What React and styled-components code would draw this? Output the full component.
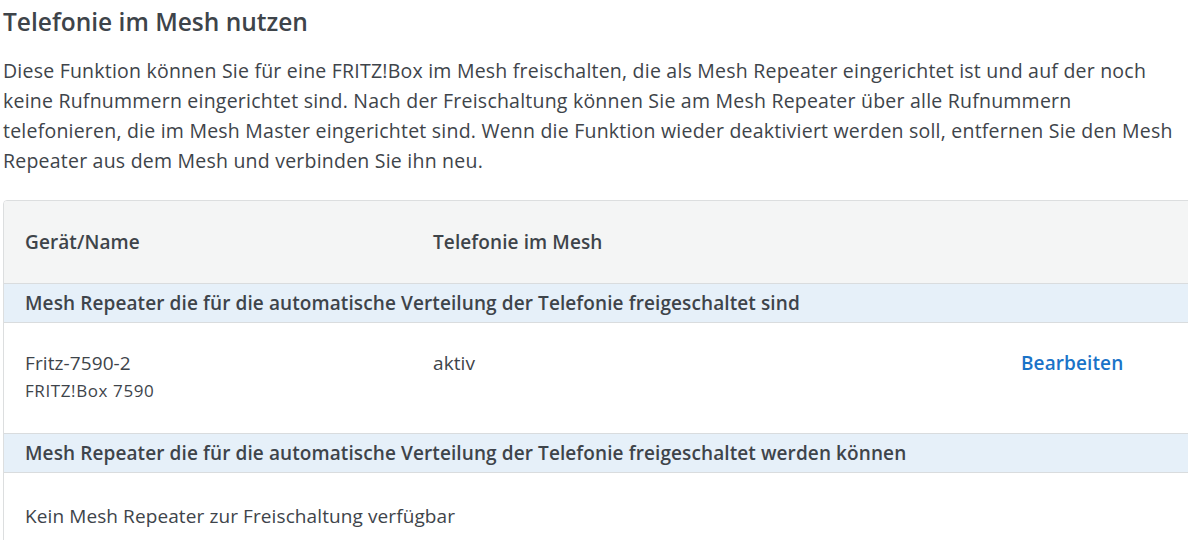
import styled, { createGlobalStyle } from "styled-components";

const Global = createGlobalStyle`
  html, body {
    margin: 0;
    padding: 0;
    background: #fff;
    overflow: hidden;
  }
  body {
    font-family: "Open Sans", "Liberation Sans", sans-serif;
    color: #3e444a;
  }
`;

const Page = styled.main`
  padding: 6px 0 0 3px;
  width: 1185px;
  height: 540px;
  overflow: hidden;
`;

const Title = styled.h2`
  margin: 0;
  font-size: 24.5px;
  font-weight: 600;
  line-height: 32px;
  color: #3e444a;
`;

const Intro = styled.p`
  margin: 18px 0 24px;
  max-width: 1180px;
  font-size: 19.5px;
  line-height: 30px;
  letter-spacing: 0.22px;
`;

const Card = styled.section`
  width: calc(100% + 40px);
  border: 1px solid #dcdedf;
  border-radius: 4px;
  overflow: hidden;
`;

const Row = styled.div`
  display: grid;
  grid-template-columns: 408px 588px auto;
  align-items: ${(p) => (p.$top ? "start" : "center")};
  padding: ${(p) => p.$pad || "0"} 0 0 21px;
  min-height: ${(p) => p.$h}px;
  box-sizing: border-box;
  background: ${(p) => p.$bg || "#fff"};
  border-bottom: ${(p) => (p.$last ? "none" : "1px solid #d9dcde")};
  font-size: 19px;
  letter-spacing: 0.1px;
`;

const HeadCell = styled.div`
  font-weight: 600;
`;

const GroupTitle = styled.div`
  grid-column: 1 / -1;
  font-weight: ${(p) => (p.$plain ? 400 : 600)};
`;

const Name = styled.div`
  line-height: 24px;
`;

const Model = styled.div`
  margin-top: 6px;
  font-size: 17px;
  line-height: 20px;
  letter-spacing: 0.6px;
`;

const Link = styled.a`
  color: #1a73c8;
  font-weight: 600;
  line-height: 24px;
  cursor: pointer;
`;

export default function App() {
  return (
    <>
      <Global />
      <Page>
        <Title>Telefonie im Mesh nutzen</Title>
        <Intro>
          Diese Funktion können Sie für eine FRITZ!Box im Mesh freischalten, die als Mesh
          Repeater eingerichtet ist und auf der noch keine Rufnummern eingerichtet sind. Nach
          der Freischaltung können Sie am Mesh Repeater über alle Rufnummern telefonieren, die
          im Mesh Master eingerichtet sind. Wenn die Funktion wieder deaktiviert werden soll,
          entfernen Sie den Mesh Repeater aus dem Mesh und verbinden Sie ihn neu.
        </Intro>
        <Card>
          <Row $h={83} $bg="#f4f5f5">
            <HeadCell>Gerät/Name</HeadCell>
            <HeadCell>Telefonie im Mesh</HeadCell>
          </Row>
          <Row $h={39} $bg="#e6f0f9">
            <GroupTitle>
              Mesh Repeater die für die automatische Verteilung der Telefonie freigeschaltet sind
            </GroupTitle>
          </Row>
          <Row $h={111} $top $pad="28px">
            <div>
              <Name>Fritz-7590-2</Name>
              <Model>FRITZ!Box 7590</Model>
            </div>
            <Name>aktiv</Name>
            <Link>Bearbeiten</Link>
          </Row>
          <Row $h={39} $bg="#e6f0f9">
            <GroupTitle>
              Mesh Repeater die für die automatische Verteilung der Telefonie freigeschaltet
              werden können
            </GroupTitle>
          </Row>
          <Row $h={86} $last>
            <GroupTitle $plain>Kein Mesh Repeater zur Freischaltung verfügbar</GroupTitle>
          </Row>
        </Card>
      </Page>
    </>
  );
}
